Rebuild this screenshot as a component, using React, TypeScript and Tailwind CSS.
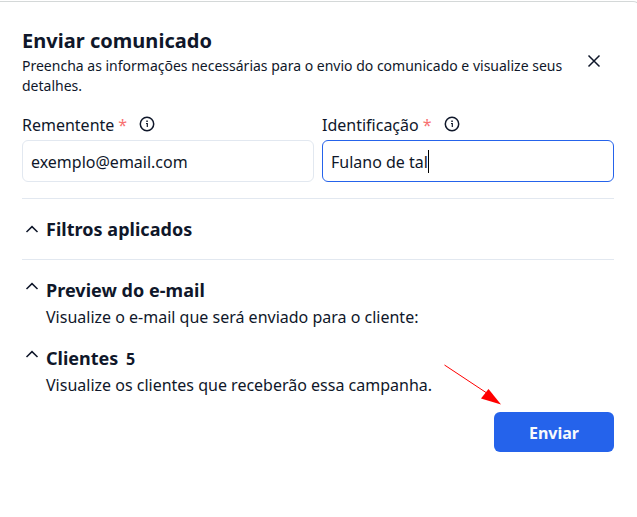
import React from 'react';

const Chevron = ({ className }: { className: string }) => (
  <svg className={className} width="20" height="20" viewBox="0 0 20 20" fill="none" stroke="currentColor" strokeWidth="1.5">
    <path d="M4.500 13 10 7.600l5.500 5.400" />
  </svg>
);

const Info = () => (
  <svg width="16" height="16" viewBox="0 0 16 16" fill="none" stroke="currentColor" strokeWidth="1.5">
    <circle cx="8" cy="8" r="6.700" />
    <path d="M7 7.500h1.300V11" strokeWidth="1.200" />
    <path d="M7.300 5.300h1.500" strokeWidth="1.400" />
  </svg>
);

const Label = ({ text }: { text: string }) => (
  <div className="flex h-6 items-center text-base leading-6">
    <span>{text}</span>
    <span className="ml-1 text-[#f87171]">*</span>
    <span className="-mt-0.5 ml-3"><Info /></span>
  </div>
);

export default function App() {
  return (
    <div className="h-[517px] w-[637px] overflow-hidden bg-white pt-px">
      <main className="h-[530px] w-[641px] rounded-tr-lg border-t border-r border-[#d4d8d8] bg-white pr-[26px] pl-[22px] font-['Noto_Sans',sans-serif] text-[#0f172a]">
        <header className="mt-[27px] flex h-[67px] items-start justify-between">
          <div>
            <h1 className="text-xl leading-6 font-bold tracking-[0.03px]">Enviar comunicado</h1>
            <p className="mt-[3px] w-[550px] text-sm leading-5">Preencha as informações necessárias para o envio do comunicado e visualize seus detalhes.</p>
          </div>
          <svg className="mt-[22px] mr-[10px]" width="20" height="20" viewBox="0 0 20 20" fill="none" stroke="currentColor" strokeWidth="1.5"><path d="m4.500 4.500 11 11M15.500 4.500l-11 11" /></svg>
        </header>
        <section className="mt-[17px] grid grid-cols-2 gap-2">
          <div>
            <Label text="Rementente" />
            <div className="mt-[3px] flex h-[42px] items-center rounded-md border border-[#e2e8f0] px-2 pt-0.5">exemplo@email.com</div>
          </div>
          <div>
            <Label text="Identificação" />
            <div className="mt-[3px] flex h-[42px] items-center rounded-md border border-[#2563eb] px-2 pt-0.5">Fulano de tal<span className="-mt-0.5 h-[23px] w-px bg-black" /></div>
          </div>
        </section>
        <section className="mt-4 flex h-[62px] items-center border-y border-[#e2e8f0]">
          <Chevron className="mr-1" />
          <h2 className="text-lg font-bold tracking-[0.03px]">Filtros aplicados</h2>
        </section>
        <section className="mt-4 flex items-start">
          <Chevron className="mr-1" />
          <div><h2 className="text-lg leading-7 font-bold tracking-[0.03px]">Preview do e-mail</h2><p className="mt-px leading-6">Visualize o e-mail que será enviado para o cliente:</p></div>
        </section>
        <section className="mt-[15px] flex items-start">
          <Chevron className="mr-1" />
          <div><h2 className="text-lg leading-7 font-bold">Clientes <span className="ml-[3px] text-base">5</span></h2><p className="mt-px leading-6">Visualize os clientes que receberão essa campanha.</p></div>
        </section>
        <footer className="relative mt-[15px] flex justify-end">
          <button className="h-10 w-[120px] rounded-md bg-[#2563eb] pt-0.5 font-bold text-[#f8fafc]">Enviar</button>
          <svg className="absolute -top-12 left-[421px]" width="62" height="44" viewBox="0 0 62 44"><path d="M1.500 1 43 28.500" stroke="red" /><path d="m45.500 25-7.500 9.500 20 6z" fill="red" /></svg>
        </footer>
      </main>
    </div>
  );
}
